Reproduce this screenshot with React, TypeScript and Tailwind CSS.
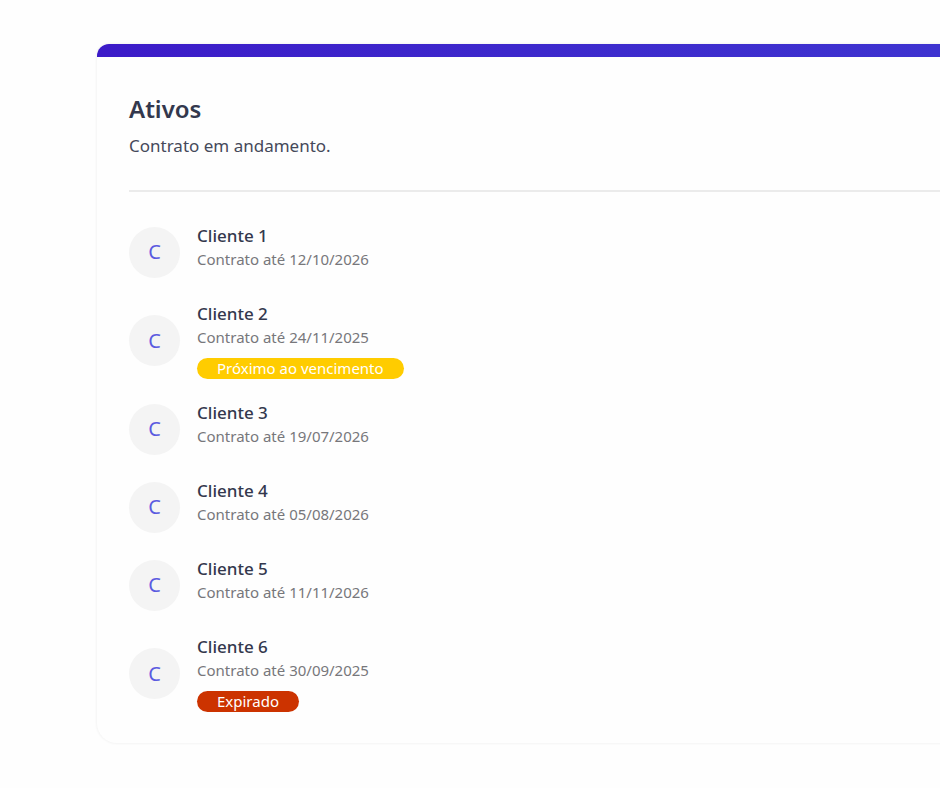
import React from 'react';
import clsx from 'clsx';

type Status = 'expiring' | 'expired';

interface Client {
  name: string;
  until: string;
  status?: Status;
}

const clients: Client[] = [
  { name: 'Cliente 1', until: '12/10/2026' },
  { name: 'Cliente 2', until: '24/11/2025', status: 'expiring' },
  { name: 'Cliente 3', until: '19/07/2026' },
  { name: 'Cliente 4', until: '05/08/2026' },
  { name: 'Cliente 5', until: '11/11/2026' },
  { name: 'Cliente 6', until: '30/09/2025', status: 'expired' },
];

const statusLabel: Record<Status, string> = {
  expiring: 'Próximo ao vencimento',
  expired: 'Expirado',
};

function StatusBadge({ status }: { status: Status }) {
  return (
    <span
      className={clsx(
        'block w-fit rounded-full px-5 text-[15px] leading-[21px] text-white',
        status === 'expiring' ? 'bg-[#ffcc00]' : 'bg-[#cc3300]'
      )}
    >
      {statusLabel[status]}
    </span>
  );
}

function ClientRow({ client }: { client: Client }) {
  return (
    <li className="flex items-center gap-[17px]">
      <div className="flex size-[51px] shrink-0 items-center justify-center rounded-full bg-[#f4f4f4] text-xl text-[#5b5be0]">
        {client.name.charAt(0)}
      </div>
      <div>
        <p className="text-[17px] leading-6 font-medium text-[#33384d]">{client.name}</p>
        <p className="mb-2.5 text-[15px] leading-[22px] text-[#77777b]">Contrato até {client.until}</p>
        {client.status && <StatusBadge status={client.status} />}
      </div>
    </li>
  );
}

export default function App() {
  return (
    <main className="min-h-screen overflow-hidden bg-[#fefefe] pt-11 pl-[97px] font-['Noto_Sans',sans-serif]">
      <section className="overflow-hidden rounded-l-[20px] rounded-tl-xl bg-[#fefefe] shadow-[0_0_2px_1px_#f4f4f4]">
        <div className="h-[13px] bg-linear-to-r from-[#3c1bc8] to-[#3e33d0]" />
        <div className="pt-9 pb-[31px] pl-8">
          <header className="border-b-2 border-[#ebebeb] pb-8">
            <h2 className="text-2xl leading-8 font-semibold text-[#33384d]">Ativos</h2>
            <p className="mt-[9px] text-[17px] leading-6 text-[#45495a]">Contrato em andamento.</p>
          </header>
          <ul className="mt-8 flex flex-col gap-[22px]">
            {clients.map((client) => (
              <ClientRow key={client.name} client={client} />
            ))}
          </ul>
        </div>
      </section>
    </main>
  );
}
